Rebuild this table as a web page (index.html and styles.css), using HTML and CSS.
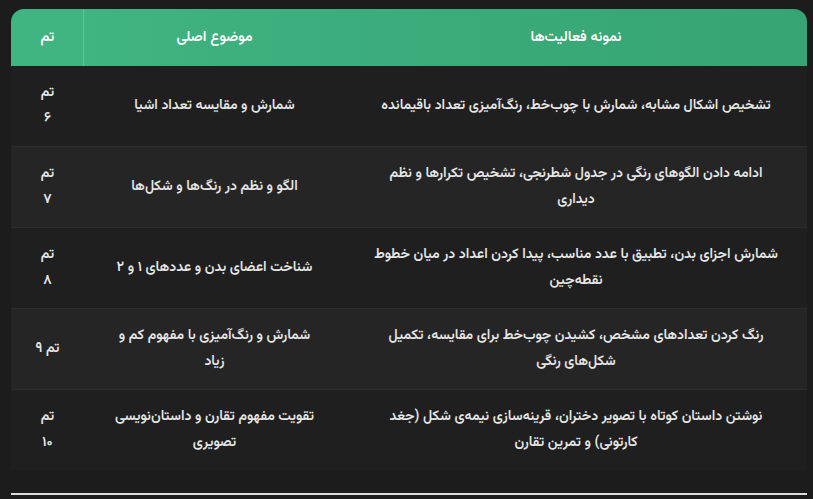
FILE: index.html
```html
<!DOCTYPE html>
<html lang="fa">
<head>
<meta charset="utf-8">
<title>جدول تم‌ها</title>
<link rel="stylesheet" href="styles.css">
</head>
<body>
<div class="page">
  <table class="themes">
    <colgroup>
      <col class="col-tm">
      <col class="col-topic">
      <col class="col-act">
    </colgroup>
    <thead>
      <tr>
        <th class="th-tm">تم</th>
        <th>موضوع اصلی</th>
        <th>نمونه فعالیت‌ها</th>
      </tr>
    </thead>
    <tbody>
      <tr>
        <td class="tm">تم<br>۶</td>
        <td class="topic">شمارش و مقایسه تعداد اشیا</td>
        <td class="act">تشخیص اشکال مشابه، شمارش با چوب‌خط، رنگ‌آمیزی تعداد باقیمانده</td>
      </tr>
      <tr>
        <td class="tm">تم<br>۷</td>
        <td class="topic">الگو و نظم در رنگ‌ها و شکل‌ها</td>
        <td class="act">ادامه دادن الگوهای رنگی در جدول شطرنجی، تشخیص تکرارها و نظم دیداری</td>
      </tr>
      <tr>
        <td class="tm">تم<br>۸</td>
        <td class="topic">شناخت اعضای بدن و عددهای ۱ و ۲</td>
        <td class="act">شمارش اجزای بدن، تطبیق با عدد مناسب، پیدا کردن اعداد در میان خطوط نقطه‌چین</td>
      </tr>
      <tr>
        <td class="tm">تم ۹</td>
        <td class="topic">شمارش و رنگ‌آمیزی با مفهوم کم و زیاد</td>
        <td class="act">رنگ کردن تعدادهای مشخص، کشیدن چوب‌خط برای مقایسه، تکمیل شکل‌های رنگی</td>
      </tr>
      <tr>
        <td class="tm">تم<br>۱۰</td>
        <td class="topic">تقویت مفهوم تقارن و داستان‌نویسی تصویری</td>
        <td class="act">نوشتن داستان کوتاه با تصویر دختران، قرینه‌سازی نیمه‌ی شکل (جغد کارتونی) و تمرین تقارن</td>
      </tr>
    </tbody>
  </table>
  <div class="rule"></div>
</div>
</body>
</html>
```

FILE: styles.css
```css
html, body {
  margin: 0;
  padding: 0;
  background: #1c1c1c;
}
body {
  font-family: "Vazirmatn", "Noto Sans Arabic", "DejaVu Sans", sans-serif;
  color: #e6e6e6;
}
.page {
  padding: 9px 6px 0 11px;
  width: 796px;
}
.themes {
  width: 796px;
  table-layout: fixed;
  border-collapse: separate;
  border-spacing: 0;
}
.col-tm { width: 73px; }
.col-topic { width: 261px; }
.col-act { width: 462px; }

.themes th {
  direction: rtl;
  height: 57px;
  padding: 0 10px;
  font-size: 14.5px;
  font-weight: 600;
  color: #ffffff;
  text-align: center;
}
.themes thead tr th:first-child {
  border-top-left-radius: 13px;
  background: #40b582;
}
.themes thead tr th:nth-child(2) {
  background: linear-gradient(to right, #40b481, #3cad7c);
}
.themes thead tr th:last-child {
  border-top-right-radius: 13px;
  background: linear-gradient(to right, #3cad7c, #37a473);
}
.th-tm {
  box-shadow: inset -1px 0 0 rgba(255, 255, 255, 0.18);
}
.themes td {
  direction: rtl;
  text-align: center;
  font-size: 14px;
  font-weight: 600;
  line-height: 26px;
  padding: 14px 27px;
  border-bottom: 1px solid #2c2c2c;
  background: #1f1f1f;
}
.themes tbody tr:nth-child(even) td {
  background: #252525;
}
.themes tbody tr:last-child td {
  border-bottom: none;
}
.themes td.tm {
  padding: 14px 6px;
  white-space: nowrap;
}
.themes td.act {
  padding: 14px 26px;
}
.rule {
  margin-top: 23px;
  width: 796px;
  height: 2px;
  background: #dcdcdc;
}
```
